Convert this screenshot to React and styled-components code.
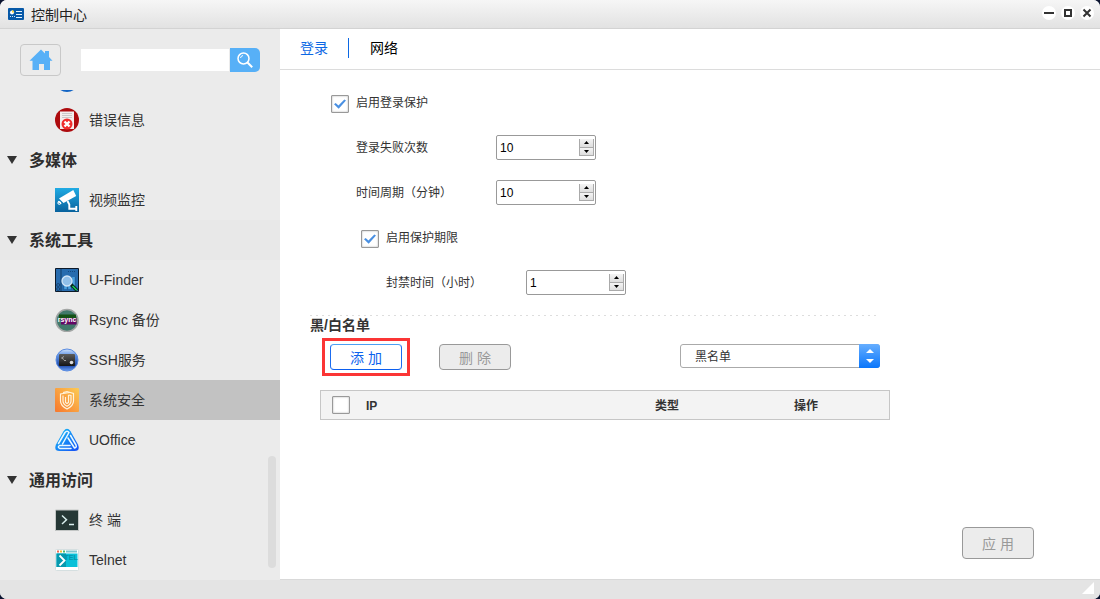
import React, { useState } from "react";
import styled, { createGlobalStyle, css } from "styled-components";

const GlobalStyle = createGlobalStyle`
  *, *::before, *::after { box-sizing: border-box; }
  html, body, #root { height: 100%; }
  body {
    margin: 0;
    background: #0b1430;
    color: #333;
    font: 12px/18px "Liberation Sans", "Noto Sans CJK SC", sans-serif;
  }
  button, input, select { font: inherit; color: inherit; margin: 0; }
  button { cursor: pointer; }
`;

const Window = styled.div`
  min-height: 100%;
  display: flex;
  flex-direction: column;
  border-radius: 7px;
  overflow: hidden;
  background: #fff;
`;

const TitleBar = styled.header`
  flex: none;
  height: 29px;
  display: flex;
  align-items: center;
  gap: 7px;
  padding: 0 6px 0 8px;
  border-bottom: 1px solid #d3d3d3;
  background: linear-gradient(#f6f6f6, #e2e2e2);
`;

const Title = styled.h1`
  flex: 1;
  margin: 0;
  padding-top: 2px;
  color: #222;
  font-size: 14px;
  font-weight: 400;
  line-height: 20px;
`;

const WindowControls = styled.div`
  display: flex;
  gap: 5px;
  padding-bottom: 2px;
`;

const WindowButton = styled.button`
  width: 14px;
  height: 14px;
  padding: 0;
  border: 0;
  border-radius: 50%;
  background: #fff;
  svg { display: block; }
`;

const Body = styled.div`
  flex: 1;
  display: flex;
`;

const Sidebar = styled.aside`
  flex: none;
  width: 280px;
  display: flex;
  flex-direction: column;
  background: #ebebeb;
`;

const SidebarTop = styled.div`
  height: 61px;
  display: flex;
  align-items: flex-start;
  padding: 15px 20px;
`;

const HomeButton = styled.button`
  flex: none;
  width: 41px;
  height: 32px;
  display: grid;
  place-items: center;
  padding: 0;
  border: 1px solid #c8c8c8;
  border-radius: 4px;
  background: #ebebeb;
`;

const SearchForm = styled.form`
  flex: 1;
  min-width: 0;
  display: flex;
  align-items: center;
  gap: 1px;
  margin: 4px 0 0 20px;
`;

const SearchInput = styled.input`
  flex: 1;
  min-width: 0;
  height: 22px;
  padding: 0 6px;
  border: 0;
  background: #fff;
`;

const SearchButton = styled.button`
  flex: none;
  width: 30px;
  height: 24px;
  display: grid;
  place-items: center;
  padding: 0;
  border: 0;
  border-radius: 0 5px 5px 0;
  background: #57b0f7;
`;

const NavScroller = styled.nav`
  position: relative;
  flex: 1 1 0;
  min-height: 490px;
  display: flex;
  flex-direction: column;
  justify-content: flex-end;
  overflow: hidden;
`;

const ScrollThumb = styled.span`
  position: absolute;
  right: 4px;
  bottom: 12px;
  width: 8px;
  height: 112px;
  border-radius: 4px;
  background: #dcdcdc;
`;

const GroupButton = styled.button`
  flex: none;
  width: 100%;
  height: 40px;
  display: flex;
  align-items: center;
  gap: 12px;
  padding: 0 7px;
  border: 0;
  background: ${(p) => (p.$shaded ? "#e8e8e8" : "transparent")};
  color: #2e2e2e;
  font-size: 16px;
  font-weight: 700;
  line-height: 24px;
  span { padding-top: 2px; }
`;

const NavLink = styled.a`
  flex: none;
  height: 40px;
  display: flex;
  align-items: center;
  gap: 10px;
  padding-left: 55px;
  background: ${(p) => (p.$active ? "#c2c2c2" : "transparent")};
  color: #333;
  font-size: 14px;
  line-height: 20px;
  text-decoration: none;
  svg { flex: none; }
`;

const Main = styled.main`
  flex: 1;
  min-width: 0;
  display: flex;
  flex-direction: column;
  border-bottom: 1px solid #d9d9d9;
`;

const Tabs = styled.div`
  height: 41px;
  display: flex;
  align-items: center;
  padding: 0 20px 2px;
  border-bottom: 1px solid #dcdcdc;
`;

const Tab = styled.button`
  height: 20px;
  padding: 0 20px 0 0;
  border: 0;
  background: none;
  color: ${(p) => (p.$active ? "#0c68e4" : "#000")};
  font-size: 14px;
  line-height: 20px;
  & + & {
    padding-left: 21px;
    border-left: 1px solid #0c68e4;
  }
`;

const Content = styled.form`
  flex: 1;
  display: flex;
  flex-direction: column;
  padding: 20px 66px 20px 30px;
`;

const Settings = styled.div`
  display: flex;
  flex-direction: column;
  gap: 20px;
  padding-bottom: 20px;
`;

const indents = { base: "21px", field: "46px", nested: "51px", deep: "76px" };

const CheckRow = styled.label`
  height: 25px;
  display: flex;
  align-items: center;
  gap: 7px;
  margin-left: ${(p) => indents[p.$indent]};
  span { padding-top: 1px; }
`;

const Checkbox = styled.input.attrs({ type: "checkbox" })`
  appearance: none;
  flex: none;
  width: 18px;
  height: 18px;
  display: grid;
  place-items: center;
  margin-top: 2px;
  border: 1px solid #999;
  border-radius: 1px;
  background: #fff;
  box-shadow: inset 0 0 2px #aaa;
  &:checked::after {
    content: "";
    width: 12px;
    height: 10px;
    margin-top: 1px;
    background: #4a90e2;
    clip-path: polygon(0 52%, 14% 40%, 37% 66%, 86% 4%, 100% 14%, 39% 98%);
  }
`;

const FieldRow = styled.div`
  height: 25px;
  display: grid;
  grid-template-columns: 140px 100px;
  align-items: center;
  margin-left: ${(p) => indents[p.$indent]};
  label { padding-top: 1px; }
`;

const NumberBox = styled.div`
  height: 25px;
  display: flex;
  align-items: center;
  padding-right: 1px;
  border: 1px solid #999;
  border-radius: 2px;
  background: #fff;
`;

const NumberInput = styled.input.attrs({ type: "number" })`
  appearance: textfield;
  flex: 1;
  min-width: 0;
  height: 23px;
  padding: 0 3px;
  border: 0;
  outline: 0;
  background: transparent;
  color: #000;
  &::-webkit-inner-spin-button,
  &::-webkit-outer-spin-button { appearance: none; margin: 0; }
`;

const Stepper = styled.div`
  width: 15px;
  height: 17px;
  display: flex;
  flex-direction: column;
`;

const StepButton = styled.button`
  flex: 1;
  display: grid;
  place-items: center;
  padding: 0;
  border: solid #aaa;
  border-width: 0 1px 1px;
  background: linear-gradient(#f4f4f4, #dedede);
`;

const ListSection = styled.section`
  width: 100%;
  max-width: 580px;
`;

const Divider = styled.hr`
  height: 1px;
  margin: 0 10px 0 0;
  border: 0;
  background: repeating-linear-gradient(90deg, #ddd 0 2px, transparent 2px 6px);
`;

const SectionTitle = styled.h2`
  margin: 0;
  font-size: 14px;
  line-height: 18px;
`;

const Actions = styled.div`
  display: flex;
  align-items: flex-start;
  margin: 4px 10px 14px 12px;
`;

const Highlight = styled.div`
  margin-right: 29px;
  padding: 3px 5px;
  border: 3px solid #fb3535;
`;

const ActionButton = styled.button`
  width: 72px;
  height: ${(p) => (p.$tall ? "32px" : "26px")};
  display: block;
  padding: 2px 0 0;
  border: 1px solid #999;
  border-radius: 4px;
  background: #ececec;
  color: #999;
  font-size: 14px;
  line-height: 20px;
  ${(p) =>
    p.$primary &&
    css`
      border-color: #4ba0f4 #1b6cf0 #0b5ff0;
      background: #fff;
      color: #0c62ee;
    `}
`;

const DeleteSlot = styled.div`
  margin-top: 6px;
`;

const SelectBox = styled.div`
  position: relative;
  width: 200px;
  height: 24px;
  margin: 6px 0 0 auto;
`;

const Select = styled.select`
  appearance: none;
  width: 100%;
  height: 100%;
  padding: 1px 30px 0 14px;
  border: 1px solid #aaa;
  border-radius: 3px;
  background: #fff;
`;

const SelectArrow = styled.span`
  position: absolute;
  inset: 0 0 0 auto;
  width: 21px;
  display: grid;
  place-items: center;
  border-radius: 0 3px 3px 0;
  background: linear-gradient(#66aeff, #0a76fb);
  pointer-events: none;
`;

const TableFrame = styled.div`
  margin-left: 10px;
`;

const Table = styled.table`
  width: 100%;
  table-layout: fixed;
  border-collapse: separate;
  border-spacing: 0;
  border: 1px solid #c6c6c6;
  background: #f3f3f3;
`;

const HeaderCell = styled.th`
  width: ${(p) => p.$width || "auto"};
  height: 28px;
  padding: 2px 0 0 10px;
  text-align: left;
  line-height: 18px;
`;

const CheckCell = styled(HeaderCell)`
  padding: 0 0 0 11px;
  ${Checkbox} { margin: 0; }
`;

const ApplySlot = styled.div`
  margin: auto 0 0 auto;
`;

const StatusBar = styled.footer`
  flex: none;
  height: 19px;
  display: flex;
  justify-content: flex-end;
  padding: 2px 6px;
  background: #e4e4e4;
`;

const Icon = ({ children, size = 24 }) => (
  <svg width={size} height={size} viewBox="0 0 24 24" aria-hidden="true">
    {children}
  </svg>
);

const LogIcon = () => (
  <Icon>
    <circle cx="12" cy="12" r="12" fill="#1264c4" />
  </Icon>
);

const ErrorIcon = () => (
  <Icon>
    <circle cx="12" cy="12" r="12" fill="#ad0b0e" />
    <path d="M5 3.5h14V21H5z" fill="#f4eeee" />
    <path d="M7 5.5h10M7 7.5h10M7 9.5h10" stroke="#c9c9c9" />
    <circle cx="12" cy="16" r="5.5" fill="#f02c2c" />
    <path d="m9.5 13.5 5 5m0-5-5 5" stroke="#fff" strokeWidth="2.4" />
  </Icon>
);

const CameraIcon = () => (
  <Icon>
    <defs>
      <linearGradient id="camera" x2="0" y2="1">
        <stop stopColor="#20abe4" />
        <stop offset="1" stopColor="#08629d" />
      </linearGradient>
    </defs>
    <path d="M0 0h24v24H0z" fill="url(#camera)" />
    <path d="M4 10.500 18.3 2l2.9 6.1-12.7 7z" fill="#fff" />
    <path d="m3.2 13.2 3 2.6" stroke="#fff" strokeWidth="1.3" />
    <circle cx="4.3" cy="15" r="1.4" fill="none" stroke="#fff" />
    <path d="m12.500 13 1.8 3.500v4.300H21M21.3 18v5" fill="none" stroke="#fff" strokeWidth="1.9" />
  </Icon>
);

const FinderIcon = () => (
  <Icon>
    <path d="M.5.5h23v23H.5z" fill="#286caf" stroke="#0d1a2a" />
    <path d="M6 1v22" stroke="#153e69" />
    <path d="M10.5 10v11M14.5 10v11M18.5 9v12" stroke="#4ba0de" strokeWidth="2.500" />
    <path d="M8.5 9v13M12.5 9v13M16.5 9v13M20.5 9v13" stroke="#2463a0" />
    <path d="M13 3.5h7" stroke="#164980" strokeDasharray="1 1" />
    <circle cx="3.2" cy="17" r="1.5" fill="none" stroke="#174675" />
    <circle cx="3.2" cy="21" r="1.5" fill="none" stroke="#174675" />
    <path d="m16 16.5 6 6" stroke="#0b241b" strokeWidth="3.4" />
    <path d="m17.5 18 4.3 4.3" stroke="#15cf5a" strokeWidth="1.5" />
    <circle cx="12" cy="13" r="5" fill="#91bfe9" stroke="#d3e6f8" strokeWidth="1.3" />
  </Icon>
);

const RsyncIcon = () => (
  <Icon>
    <circle cx="12" cy="12.5" r="11" fill="#41796b" stroke="#a3a6a5" strokeWidth="1.6" />
    <path d="M4 6.500h17V12H4z" fill="#155217" />
    <path d="M6 10h15.500v6.500H6z" fill="#640765" />
    <text x="12" y="14" fill="#fff" fontSize="7" fontWeight="700" textAnchor="middle">rsync</text>
  </Icon>
);

const SshIcon = () => (
  <Icon>
    <defs>
      <linearGradient id="ssh" x2="0" y2="1">
        <stop stopColor="#d2e4fc" />
        <stop offset=".3" stopColor="#5c90e4" />
        <stop offset=".75" stopColor="#1f4aa8" />
        <stop offset="1" stopColor="#6ba0f5" />
      </linearGradient>
      <linearGradient id="screen" x2="0" y2="1">
        <stop stopColor="#5c5c5c" />
        <stop offset="1" stopColor="#151515" />
      </linearGradient>
    </defs>
    <circle cx="12" cy="12" r="11" fill="url(#ssh)" stroke="#5a8be0" />
    <rect x="4" y="6" width="16" height="12" rx="1" fill="url(#screen)" />
    <path d="M9 8.5 6.5 10 9 11.5M9 12.5h2" fill="none" stroke="#bbb" strokeWidth=".8" />
    <circle cx="16.500" cy="14.500" r="1.800" fill="#ddd" />
  </Icon>
);

const SecurityIcon = () => (
  <Icon>
    <defs>
      <linearGradient id="shield" x1="0" y1="1" x2="1" y2="0">
        <stop stopColor="#f7772c" />
        <stop offset="1" stopColor="#fccb55" />
      </linearGradient>
    </defs>
    <rect width="24" height="24" rx="1" fill="url(#shield)" />
    <g fill="none" stroke="#fff3dc" strokeWidth="1.2">
      <path d="M8 4.500 12 3.500l6.500 2V13c0 4-2.500 6-6.500 8-4-2-6.500-4-6.500-8V6l9-1.500" />
      <path d="M8 7.500V13c0 2.500 1.500 4 4 5.300 2.500-1.300 4-2.800 4-5.300V7.500l-2.500-.5" />
      <path d="M13.500 7v7.500l-1.500 1-1.500-1V9" />
    </g>
  </Icon>
);

const OfficeIcon = () => (
  <Icon>
    <defs>
      <linearGradient id="office" x2="1" y2="1">
        <stop stopColor="#17c5f7" />
        <stop offset="1" stopColor="#164cf5" />
      </linearGradient>
    </defs>
    <path d="M8.500 3.200Q12 -1.500 15.500 3.200L23 16.500Q25.500 22.800 19.500 23h-15Q-1.500 22.800 1 16.500z" fill="url(#office)" />
    <g fill="none" stroke="#eaf8ff" strokeWidth="1.500" strokeLinecap="round" strokeLinejoin="round">
      <path d="M3.500 15.500 10 4.500Q12 2 14 4.500L7.500 16" />
      <path d="m13 10 6.500 10q2.500-.5 1.500-3L15.500 7.500" />
      <path d="M15 17.500H4.500q-2.500 2 .5 3H16" />
    </g>
  </Icon>
);

const TerminalIcon = () => (
  <Icon>
    <path d="M.5 2h23v20.500H.5z" fill="#253735" stroke="#c3c6c5" />
    <path d="m7 7.500 4.500 4.200L7 16M14 16.500h5" fill="none" stroke="#d9eeee" strokeWidth="1.500" />
  </Icon>
);

const TelnetIcon = () => (
  <Icon>
    <rect x=".5" y="1.500" width="23" height="21" rx="1" fill="#fff" stroke="#d5dfe0" />
    <path d="M2 3.500h2" stroke="#f06c55" strokeWidth="2" />
    <path d="M5 3.500h2" stroke="#f1bc38" strokeWidth="2" />
    <path d="M8 3.500h2" stroke="#45bb6d" strokeWidth="2" />
    <path d="M11 3.500h11" stroke="#7bc5cf" strokeWidth="2" />
    <path d="M1.500 5.500h21V19h-21z" fill="#08c0d8" />
    <path d="M1.500 5.500H11V19H1.500z" fill="#0799ae" />
    <text x="9.500" y="12" fill="#0794ab" fontSize="7" fontWeight="700">TEL</text>
    <path d="m4.500 7.500 5 5-5 5" fill="none" stroke="#fff" strokeWidth="1.800" />
  </Icon>
);

const AppIcon = () => (
  <svg width="16" height="12" viewBox="0 0 16 12" aria-hidden="true">
    <rect width="16" height="12" rx="1" fill="#0759a8" />
    <circle cx="4" cy="4.500" r="2" fill="#fff" />
    <path d="M4 4.500V2a2.500 2.500 0 0 1 2.300 2.500z" fill="#ffd43b" />
    <path d="M2 8.500h5" stroke="#cce6fa" strokeDasharray="1 1" />
    <path d="M8 3.500h6M8 6.500h6M8 9.500h6" stroke="#e4f2fc" />
  </svg>
);

const HomeIcon = () => (
  <svg width="24" height="22" viewBox="0 0 24 22" aria-hidden="true">
    <path d="M12 .5 16 4.500V2h4v6l3.500 3.700H21V21h-6v-6h-5v6H3.500v-9.300H.5z" fill="#57b0f7" />
  </svg>
);

const SearchIcon = () => (
  <svg width="16" height="16" viewBox="0 0 16 16" aria-hidden="true">
    <g fill="none" stroke="#fff" strokeWidth="1.500">
      <circle cx="6.500" cy="6.500" r="5.500" />
      <path d="m10.500 10.500 4.700 4.700" strokeWidth="2" />
      <path d="M3.500 6q.3-2 2.500-2.500" strokeWidth="1" />
    </g>
  </svg>
);

const controls = [
  { name: "最小化", shape: <path d="M2 7h10" strokeWidth="2" /> },
  { name: "最大化", shape: <path d="M4 4h6v6H4z" strokeWidth="2" /> },
  { name: "关闭", shape: <path d="m3.500 3.500 7 7m0-7-7 7" strokeWidth="2" /> },
];

const groups = [
  { items: [{ label: "", name: "系统日志", icon: LogIcon }, { label: "错误信息", icon: ErrorIcon }] },
  { title: "多媒体", items: [{ label: "视频监控", icon: CameraIcon }] },
  {
    title: "系统工具",
    shaded: true,
    items: [
      { label: "U-Finder", icon: FinderIcon },
      { label: "Rsync 备份", icon: RsyncIcon },
      { label: "SSH服务", icon: SshIcon },
      { label: "系统安全", icon: SecurityIcon, active: true },
      { label: "UOffice", icon: OfficeIcon },
    ],
  },
  {
    title: "通用访问",
    items: [
      { label: "终 端", icon: TerminalIcon },
      { label: "Telnet", icon: TelnetIcon },
    ],
  },
];

function NavGroup({ title, shaded, items }) {
  return (
    <>
      {title && (
        <GroupButton type="button" $shaded={shaded} aria-expanded="true">
          <svg width="10" height="8" viewBox="0 0 10 8" aria-hidden="true">
            <path d="M0 0h10L5 8z" fill="#333" />
          </svg>
          <span>{title}</span>
        </GroupButton>
      )}
      {items.map(({ label, name, icon: ItemIcon, active }) => (
        <NavLink key={label} href="#" aria-label={name} $active={active}>
          <ItemIcon />
          {label}
        </NavLink>
      ))}
    </>
  );
}

function NumberField({ id, label, initial, indent }) {
  const [value, setValue] = useState(initial);
  return (
    <FieldRow $indent={indent}>
      <label htmlFor={id}>{label}</label>
      <NumberBox>
        <NumberInput id={id} value={value} onChange={(e) => setValue(Number(e.target.value))} />
        <Stepper>
          <StepButton type="button" aria-label="增加" onClick={() => setValue(value + 1)}>
            <svg width="5" height="3" viewBox="0 0 5 3"><path d="M0 3 2.500 0 5 3z" /></svg>
          </StepButton>
          <StepButton type="button" aria-label="减少" onClick={() => setValue(value - 1)}>
            <svg width="5" height="3" viewBox="0 0 5 3"><path d="M0 0h5L2.500 3z" /></svg>
          </StepButton>
        </Stepper>
      </NumberBox>
    </FieldRow>
  );
}

export default function App() {
  return (
    <>
      <GlobalStyle />
      <Window>
        <TitleBar>
          <AppIcon />
          <Title>控制中心</Title>
          <WindowControls>
            {controls.map(({ name, shape }) => (
              <WindowButton key={name} type="button" aria-label={name}>
                <svg width="14" height="14" viewBox="0 0 14 14" fill="none" stroke="#333">{shape}</svg>
              </WindowButton>
            ))}
          </WindowControls>
        </TitleBar>

        <Body>
          <Sidebar>
            <SidebarTop>
              <HomeButton type="button" aria-label="主页"><HomeIcon /></HomeButton>
              <SearchForm onSubmit={(e) => e.preventDefault()}>
                <SearchInput type="text" aria-label="搜索" />
                <SearchButton aria-label="搜索"><SearchIcon /></SearchButton>
              </SearchForm>
            </SidebarTop>
            <NavScroller>
              {groups.map((group, i) => <NavGroup key={i} {...group} />)}
              <ScrollThumb />
            </NavScroller>
          </Sidebar>

          <Main>
            <Tabs role="tablist">
              <Tab type="button" role="tab" aria-selected="true" $active>登录</Tab>
              <Tab type="button" role="tab" aria-selected="false">网络</Tab>
            </Tabs>
            <Content onSubmit={(e) => e.preventDefault()}>
              <Settings>
                <CheckRow $indent="base"><Checkbox defaultChecked /><span>启用登录保护</span></CheckRow>
                <NumberField id="failures" label="登录失败次数" initial={10} indent="field" />
                <NumberField id="period" label="时间周期（分钟）" initial={10} indent="field" />
                <CheckRow $indent="nested"><Checkbox defaultChecked /><span>启用保护期限</span></CheckRow>
                <NumberField id="ban" label="封禁时间（小时）" initial={1} indent="deep" />
              </Settings>

              <ListSection>
                <Divider />
                <SectionTitle>黑/白名单</SectionTitle>
                <Actions>
                  <Highlight><ActionButton type="button" $primary>添 加</ActionButton></Highlight>
                  <DeleteSlot><ActionButton type="button" disabled>删 除</ActionButton></DeleteSlot>
                  <SelectBox>
                    <Select aria-label="名单类型" defaultValue="black">
                      <option value="black">黑名单</option>
                      <option value="white">白名单</option>
                    </Select>
                    <SelectArrow>
                      <svg width="8" height="14" viewBox="0 0 8 14" fill="#fff">
                        <path d="M0 4 4 0l4 4zM0 10h8l-4 4z" />
                      </svg>
                    </SelectArrow>
                  </SelectBox>
                </Actions>
                <TableFrame>
                  <Table>
                    <thead>
                      <tr>
                        <CheckCell $width="35px"><Checkbox aria-label="全选" /></CheckCell>
                        <HeaderCell>IP</HeaderCell>
                        <HeaderCell $width="139px">类型</HeaderCell>
                        <HeaderCell $width="105px">操作</HeaderCell>
                      </tr>
                    </thead>
                  </Table>
                </TableFrame>
              </ListSection>

              <ApplySlot><ActionButton $tall disabled>应 用</ActionButton></ApplySlot>
            </Content>
          </Main>
        </Body>

        <StatusBar>
          <svg width="12" height="12" viewBox="0 0 12 12" aria-hidden="true">
            <path d="M12 0v12H0z" fill="#fff" />
          </svg>
        </StatusBar>
      </Window>
    </>
  );
}
